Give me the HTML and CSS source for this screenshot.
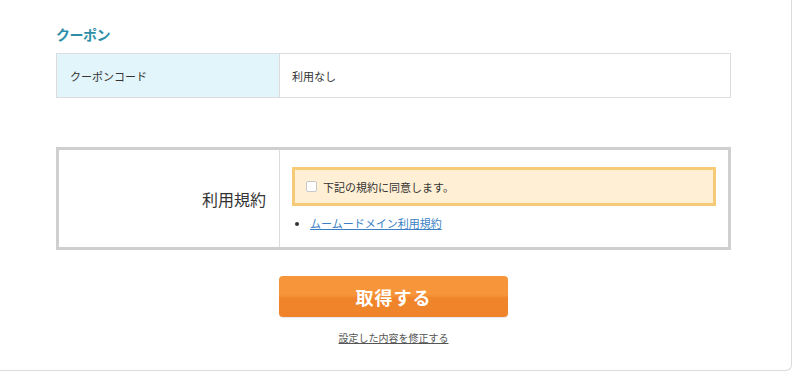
FILE: index.html
```html
<!DOCTYPE html>
<html lang="ja">
<head>
<meta charset="utf-8">
<link rel="stylesheet" href="styles.css">
</head>
<body>
<div class="card">
  <div class="inner">
    <h2 class="title">クーポン</h2>
    <table class="coupon">
      <tr>
        <th>クーポンコード</th>
        <td>利用なし</td>
      </tr>
    </table>

    <table class="terms">
      <tr>
        <th>利用規約</th>
        <td>
          <label class="agree"><span class="check"></span>下記の規約に同意します。</label>
          <ul class="links">
            <li><a href="#">ムームードメイン利用規約</a></li>
          </ul>
        </td>
      </tr>
    </table>

    <div class="actions">
      <button class="submit" type="button">取得する</button>
      <a class="back" href="#">設定した内容を修正する</a>
    </div>
  </div>
</div>
</body>
</html>
```

FILE: styles.css
```css
* { box-sizing: border-box; }
html, body { margin: 0; padding: 0; background: #fff; }
body {
  font-family: "Noto Sans CJK JP", "Noto Sans", sans-serif;
  color: #333;
}
.card {
  width: 792px;
  height: 371px;
  border-right: 1px solid #dcdcdc;
  border-bottom: 1px solid #dcdcdc;
  border-bottom-right-radius: 6px;
  background: #fff;
}
.inner {
  padding: 25px 0 0 56px;
  width: 732px;
}
.title {
  margin: 0 0 10px;
  font-size: 14px;
  line-height: 18px;
  font-weight: bold;
  color: #2e8ea8;
  letter-spacing: -0.5px;
}
.coupon {
  width: 675px;
  border-collapse: collapse;
  border: 1px solid #dcdcdc;
  font-size: 11px;
}
.coupon th, .coupon td {
  height: 44px;
  padding: 0 12px;
  text-align: left;
  font-weight: normal;
  border: 1px solid #dcdcdc;
}
.coupon th {
  width: 223px;
  background: #e2f5fa;
  padding-left: 13px;
}
.terms {
  margin-top: 49px;
  width: 675px;
  border-collapse: separate;
  border-spacing: 0;
  border: 3px solid #cfcfcf;
}
.terms th {
  width: 221px;
  text-align: right;
  padding: 0 13px 0 0;
  font-size: 16px;
  font-weight: normal;
  border-right: 1px solid #dcdcdc;
  vertical-align: middle;
}
.terms td {
  padding: 17px 12px 17px 12px;
  vertical-align: top;
}
.agree {
  display: flex;
  align-items: center;
  height: 39px;
  border: 3px solid #f6cb78;
  background: #fff0d5;
  padding-left: 11px;
  font-size: 11px;
  color: #333;
}
.check {
  width: 11px;
  height: 11px;
  border: 1px solid #c8c8c8;
  border-radius: 2px;
  background: #fff;
  margin-right: 6px;
}
.links {
  margin: 0;
  padding: 0 0 0 18px;
  font-size: 11px;
  line-height: 14px;
}
.links li {
  margin-top: 10px;
}
.links a {
  color: #3a7fc4;
  text-decoration: underline;
}
.actions {
  display: flex;
  flex-direction: column;
  align-items: center;
  margin-top: 26px;
  width: 675px;
}
.submit {
  width: 229px;
  height: 41px;
  border: none;
  border-radius: 4px;
  background: linear-gradient(#f7953b 0%, #f7953b 45%, #f0842a 55%, #f0842a 100%);
  color: #fff;
  font-family: "Noto Sans CJK JP", sans-serif;
  font-size: 18px;
  font-weight: bold;
  letter-spacing: 1px;
  box-shadow: 0 1px 1px rgba(0,0,0,0.1);
}
.back {
  margin-top: 13px;
  font-size: 10px;
  color: #555;
  text-decoration: underline;
}
```
